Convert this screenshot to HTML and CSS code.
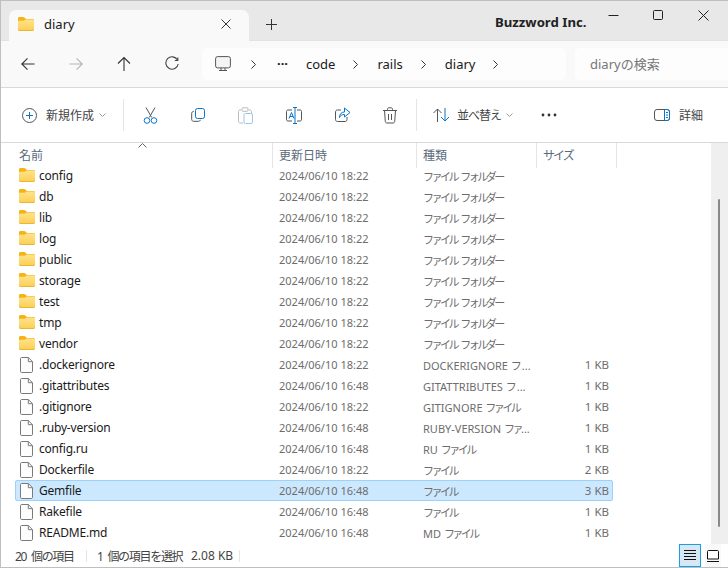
FILE: index.html
```html
<!DOCTYPE html>
<html lang="ja">
<head>
<meta charset="utf-8">
<title>diary</title>
<link rel="stylesheet" href="styles.css">
</head>
<body>
<svg class="defs" width="0" height="0" aria-hidden="true">
  <defs>
    <linearGradient id="fg" x1="0" y1="0" x2="0" y2="1"><stop offset="0" stop-color="#ffe38a"/><stop offset="1" stop-color="#fbcf55"/></linearGradient>
    <symbol id="folder" viewBox="0 0 16 14">
      <path d="M0 1.500C0 .7.600 0 1.400 0h3.800c.5 0 .8.200 1.100.5L8 2h6.600c.8 0 1.400.600 1.400 1.400V6H0z" fill="#f5b316"/>
      <path d="M0 4.600c0-.5.400-.9.900-.9h4.300c.4 0 .7-.1 1-.3L7.600 2.500H14.600c.8 0 1.400.600 1.400 1.400V12.300c0 .8-.6 1.400-1.400 1.400H1.400C.6 13.700 0 13.100 0 12.300z" fill="url(#fg)"/>
      <path d="M0 12.300c0 .8.600 1.400 1.400 1.400H14.600c.8 0 1.400-.6 1.400-1.400V11.800c0 .6-.6 1.100-1.400 1.100H1.400C.6 12.900 0 12.400 0 11.800z" fill="#e6a817"/>
    </symbol>
    <symbol id="file" viewBox="0 0 13 16">
      <path d="M1.500.5H8.300L12.500 4.700V14.300c0 .7-.5 1.200-1.200 1.200H1.700c-.7 0-1.200-.5-1.200-1.200V1.700C.5 1 1 .5 1.500.5z" fill="#fdfdfd" stroke="#7a7a7a"/>
      <path d="M8.300.5V4.700H12.500" fill="none" stroke="#7a7a7a"/>
    </symbol>
  </defs>
</svg>
<div class="window">
  <header class="titlebar">
    <div class="tab">
      <svg class="tab-folder" width="16" height="14"><use href="#folder"/></svg>
      <span class="tab-title">diary</span>
      <svg class="tab-close" width="10" height="10" viewBox="0 0 10 10"><path d="M.5.500l9 9M9.500.500l-9 9" stroke="#333" fill="none"/></svg>
    </div>
    <svg class="tab-new" width="11" height="11" viewBox="0 0 11 11"><path d="M5.500 0v11M0 5.500h11" stroke="#333" fill="none"/></svg>
    <span class="company">Buzzword Inc.</span>
    <div class="winctl">
      <svg width="11" height="11" viewBox="0 0 11 11"><path d="M.5 5.500h10" stroke="#222"/></svg>
      <svg width="11" height="11" viewBox="0 0 11 11"><rect x=".5" y=".5" width="9" height="9" rx="1" fill="none" stroke="#222"/></svg>
      <svg width="11" height="11" viewBox="0 0 11 11"><path d="M.5.500l10 10M10.500.500l-10 10" stroke="#222" fill="none"/></svg>
    </div>
  </header>

  <nav class="navbar">
    <div class="navbtns">
      <svg width="48" height="16" viewBox="0 0 48 16"><path d="M30.500 8H18M23.500 2.300L17.800 8l5.700 5.700" fill="none" stroke="#333" stroke-width="1.100"/></svg>
      <svg width="48" height="16" viewBox="0 0 48 16"><path d="M17.500 8H30M24.500 2.300L30.200 8l-5.700 5.700" fill="none" stroke="#b5b5b5" stroke-width="1.100"/></svg>
      <svg width="48" height="16" viewBox="0 0 48 16"><path d="M24 15V1.500M18 7.500L24 1.500l6 6" fill="none" stroke="#333" stroke-width="1.100"/></svg>
      <svg width="48" height="16" viewBox="0 0 48 16"><path d="M29.500 4A6.200 6.200 0 1 0 30.200 8M29.800 1.500v3h-3" fill="none" stroke="#444" stroke-width="1.100"/></svg>
    </div>
    <div class="crumbs">
      <svg class="pc" width="16" height="16" viewBox="0 0 16 16"><rect x=".6" y=".6" width="14.800" height="11.300" rx="2" fill="#f4f4f4" stroke="#555"/><path d="M4 14.500h8M6 12v2.500M10 12v2.500" stroke="#555" fill="none"/></svg>
      <svg class="chev" width="5" height="9" viewBox="0 0 5 9"><path d="M.5.500l4 4-4 4" fill="none" stroke="#333"/></svg>
      <span class="more">···</span>
      <span class="crumb">code</span>
      <svg class="chev" width="5" height="9" viewBox="0 0 5 9"><path d="M.5.500l4 4-4 4" fill="none" stroke="#333"/></svg>
      <span class="crumb">rails</span>
      <svg class="chev" width="5" height="9" viewBox="0 0 5 9"><path d="M.5.500l4 4-4 4" fill="none" stroke="#333"/></svg>
      <span class="crumb">diary</span>
      <svg class="chev" width="5" height="9" viewBox="0 0 5 9"><path d="M.5.500l4 4-4 4" fill="none" stroke="#333"/></svg>
    </div>
    <div class="search">diaryの検索</div>
  </nav>

  <div class="toolbar">
    <div class="tb-new">
      <svg width="15" height="15" viewBox="0 0 15 15"><circle cx="7.500" cy="7.500" r="7" fill="none" stroke="#555"/><path d="M7.500 4v7M4 7.500h7" stroke="#0a74c9" fill="none"/></svg>
      <span class="tb-label">新規作成</span>
      <svg class="caret" width="7" height="4" viewBox="0 0 7 4"><path d="M.5.500l3 3 3-3" fill="none" stroke="#999"/></svg>
    </div>
    <div class="tb-sep"></div>
    <div class="tb-icons">
      <svg width="48" height="17" viewBox="0 0 48 17"><path d="M19 .5l5.700 10M28 .5l-5.700 10" stroke="#555" fill="none"/><circle cx="20" cy="13.500" r="2.800" fill="none" stroke="#0a74c9"/><circle cx="27" cy="13.500" r="2.800" fill="none" stroke="#0a74c9"/></svg>
      <svg width="48" height="16" viewBox="0 0 48 16"><path d="M19 4.500h-.5c-1 0-1.800.8-1.800 1.800v6.200c0 1 .8 1.800 1.800 1.800h5c1 0 1.800-.6 1.800-1.500" fill="none" stroke="#555"/><rect x="20.500" y="1.500" width="9" height="10" rx="2" fill="none" stroke="#0a74c9"/></svg>
      <svg class="dim" width="48" height="17" viewBox="0 0 48 17"><path d="M18 3h-1c-.8 0-1.500.7-1.500 1.500v10c0 .8.700 1.500 1.500 1.500h3M26 3h1c.8 0 1.500.7 1.500 1.500V6" fill="none" stroke="#555"/><rect x="19" y=".8" width="6" height="3.500" rx="1" fill="none" stroke="#555"/><rect x="21" y="6.500" width="8.500" height="10" rx="1.500" fill="none" stroke="#0a74c9"/></svg>
      <svg width="48" height="17" viewBox="0 0 48 17"><path d="M21 3h-4c-1 0-1.500.6-1.500 1.500v8c0 .9.500 1.500 1.500 1.500h4M26 3h3c1 0 1.500.6 1.500 1.500v8c0 .9-.5 1.500-1.500 1.500h-3" fill="none" stroke="#555"/><path d="M24 .5v16M22 .5h4M22 16.500h4" fill="none" stroke="#0a74c9"/><path d="M18 11.500l2.500-6 2.500 6M19 9.500h3" fill="none" stroke="#0a74c9"/></svg>
      <svg width="48" height="16" viewBox="0 0 48 16"><path d="M22 3h-3.500c-1.200 0-2 .8-2 2v7.500c0 1.200.8 2 2 2H26c1.200 0 2-.8 2-2V10" fill="none" stroke="#555"/><path d="M25.500 1l5.500 4.500-5.500 4.500V7.500c-2.500 0-4 .8-5 3 0-3.500 2-5.500 5-5.500z" fill="none" stroke="#0a74c9"/></svg>
      <svg width="48" height="17" viewBox="0 0 48 17"><path d="M16 3.500h14M20.500 3.500V2.300c0-1 .6-1.500 1.300-1.500h2.400c.7 0 1.300.5 1.300 1.500v1.200M17.500 3.500l.8 11c.1.900.7 1.500 1.700 1.500h6c1 0 1.600-.6 1.700-1.500l.8-11M21.500 7v6M24.500 7v6" fill="none" stroke="#555"/></svg>
    </div>
    <div class="tb-sep"></div>
    <div class="tb-sort">
      <svg width="17" height="14" viewBox="0 0 17 14"><path d="M4.500 14V1M.5 5l4-4 4 4" fill="none" stroke="#555"/><path d="M12 0v13M8 9l4 4 4-4" fill="none" stroke="#0a74c9"/></svg>
      <span class="tb-label kana">並べ替え</span>
      <svg class="caret" width="7" height="4" viewBox="0 0 7 4"><path d="M.5.500l3 3 3-3" fill="none" stroke="#999"/></svg>
    </div>
    <svg class="tb-more" width="16" height="4" viewBox="0 0 16 4"><circle cx="2" cy="2" r="1.400" fill="#333"/><circle cx="8" cy="2" r="1.400" fill="#333"/><circle cx="14" cy="2" r="1.400" fill="#333"/></svg>
    <div class="tb-detail">
      <svg width="16" height="12" viewBox="0 0 16 12"><rect x=".5" y=".5" width="15" height="11" rx="2.500" fill="none" stroke="#555"/><path d="M10.500.5h3c1.200 0 2 .8 2 2v7c0 1.200-.8 2-2 2h-3zM12 3.500h2M12 6h2M12 8.500h2" fill="none" stroke="#0a74c9"/></svg>
      <span class="tb-label">詳細</span>
    </div>
  </div>

  <div class="content">
    <div class="list">
      <div class="thead">
        <span class="th th-name">名前<svg class="sort-arrow" width="9" height="5" viewBox="0 0 9 5"><path d="M.5 4.500l4-4 4 4" fill="none" stroke="#666"/></svg></span>
        <span class="th">更新日時</span>
        <span class="th">種類</span>
        <span class="th th-size">サイズ</span>
      </div>
      <div class="row"><span class="name"><svg class="ic-folder" width="16" height="14"><use href="#folder"/></svg>config</span><span class="cell">2024/06/10 18:22</span><span class="cell type">ファイル フォルダー</span><span class="size"></span></div>
      <div class="row"><span class="name"><svg class="ic-folder" width="16" height="14"><use href="#folder"/></svg>db</span><span class="cell">2024/06/10 18:22</span><span class="cell type">ファイル フォルダー</span><span class="size"></span></div>
      <div class="row"><span class="name"><svg class="ic-folder" width="16" height="14"><use href="#folder"/></svg>lib</span><span class="cell">2024/06/10 18:22</span><span class="cell type">ファイル フォルダー</span><span class="size"></span></div>
      <div class="row"><span class="name"><svg class="ic-folder" width="16" height="14"><use href="#folder"/></svg>log</span><span class="cell">2024/06/10 18:22</span><span class="cell type">ファイル フォルダー</span><span class="size"></span></div>
      <div class="row"><span class="name"><svg class="ic-folder" width="16" height="14"><use href="#folder"/></svg>public</span><span class="cell">2024/06/10 18:22</span><span class="cell type">ファイル フォルダー</span><span class="size"></span></div>
      <div class="row"><span class="name"><svg class="ic-folder" width="16" height="14"><use href="#folder"/></svg>storage</span><span class="cell">2024/06/10 18:22</span><span class="cell type">ファイル フォルダー</span><span class="size"></span></div>
      <div class="row"><span class="name"><svg class="ic-folder" width="16" height="14"><use href="#folder"/></svg>test</span><span class="cell">2024/06/10 18:22</span><span class="cell type">ファイル フォルダー</span><span class="size"></span></div>
      <div class="row"><span class="name"><svg class="ic-folder" width="16" height="14"><use href="#folder"/></svg>tmp</span><span class="cell">2024/06/10 18:22</span><span class="cell type">ファイル フォルダー</span><span class="size"></span></div>
      <div class="row"><span class="name"><svg class="ic-folder" width="16" height="14"><use href="#folder"/></svg>vendor</span><span class="cell">2024/06/10 18:22</span><span class="cell type">ファイル フォルダー</span><span class="size"></span></div>
      <div class="row"><span class="name"><svg class="ic-file" width="13" height="16"><use href="#file"/></svg>.dockerignore</span><span class="cell">2024/06/10 18:22</span><span class="cell">DOCKERIGNORE フ...</span><span class="size">1 KB</span></div>
      <div class="row"><span class="name"><svg class="ic-file" width="13" height="16"><use href="#file"/></svg>.gitattributes</span><span class="cell">2024/06/10 16:48</span><span class="cell">GITATTRIBUTES フ...</span><span class="size">1 KB</span></div>
      <div class="row"><span class="name"><svg class="ic-file" width="13" height="16"><use href="#file"/></svg>.gitignore</span><span class="cell">2024/06/10 18:22</span><span class="cell">GITIGNORE <span class="kana">ファイル</span></span><span class="size">1 KB</span></div>
      <div class="row"><span class="name"><svg class="ic-file" width="13" height="16"><use href="#file"/></svg>.ruby-version</span><span class="cell">2024/06/10 16:48</span><span class="cell">RUBY-VERSION <span class="kana">ファ</span>...</span><span class="size">1 KB</span></div>
      <div class="row"><span class="name"><svg class="ic-file" width="13" height="16"><use href="#file"/></svg>config.ru</span><span class="cell">2024/06/10 16:48</span><span class="cell">RU <span class="kana">ファイル</span></span><span class="size">1 KB</span></div>
      <div class="row"><span class="name"><svg class="ic-file" width="13" height="16"><use href="#file"/></svg>Dockerfile</span><span class="cell">2024/06/10 18:22</span><span class="cell type">ファイル</span><span class="size">2 KB</span></div>
      <div class="row selected"><span class="name"><svg class="ic-file" width="13" height="16"><use href="#file"/></svg>Gemfile</span><span class="cell">2024/06/10 16:48</span><span class="cell type">ファイル</span><span class="size">3 KB</span></div>
      <div class="row"><span class="name"><svg class="ic-file" width="13" height="16"><use href="#file"/></svg>Rakefile</span><span class="cell">2024/06/10 16:48</span><span class="cell type">ファイル</span><span class="size">1 KB</span></div>
      <div class="row"><span class="name"><svg class="ic-file" width="13" height="16"><use href="#file"/></svg>README.md</span><span class="cell">2024/06/10 16:48</span><span class="cell">MD <span class="kana">ファイル</span></span><span class="size">1 KB</span></div>
    </div>
    <div class="scrolltrack"><div class="scrollthumb"></div></div>
  </div>

  <footer class="statusbar">
    <span class="st-count kana">20 個の項目</span>
    <span class="st-sep"></span>
    <span class="st-sel kana">1 個の項目を選択</span>
    <span class="st-size">2.08 KB</span>
    <span class="st-sep"></span>
    <span class="st-views">
      <span class="view active"><svg width="12" height="11" viewBox="0 0 12 11"><path d="M0 .5h12M0 3.500h12M0 6.500h12M0 9.500h12" stroke="#111" fill="none"/></svg></span>
      <span class="view compact"><svg width="12" height="12" viewBox="0 0 12 12"><path d="M.5 9V1.500c0-.6.4-1 1-1h9c.6 0 1 .4 1 1V9z" fill="#fff" stroke="#111"/><path d="M0 11.500h12" stroke="#111"/></svg></span>
    </span>
  </footer>
</div>
</body>
</html>
```

FILE: styles.css
```css
* { box-sizing: border-box; }
html, body { margin: 0; padding: 0; }
body {
  width: 728px;
  height: 568px;
  overflow: hidden;
  background: #fff;
  font-family: "Noto Sans", "Noto Sans CJK JP", sans-serif;
  font-size: 12px;
  color: #1a1a1a;
}
.defs { display: block; height: 0; }
.window {
  width: 728px;
  height: 568px;
  border: 1px solid #bfbfbf;
  border-right: 0;
  display: flex;
  flex-direction: column;
  background: #fff;
}
.kana { letter-spacing: -1px; }

/* Title bar */
.titlebar {
  height: 40px;
  flex: none;
  background: #e8e8e8;
  display: flex;
  align-items: flex-end;
  padding-left: 8px;
  border-bottom: 1px solid #e2e2e2;
}
.tab {
  width: 240px;
  height: 31px;
  margin-bottom: -1px;
  background: #f9f9f9;
  border-radius: 7px 7px 0 0;
  display: flex;
  align-items: center;
  padding: 0 18px 0 9px;
}
.tab-folder { flex: none; margin-top: -3px; }
.tab-title { margin-left: 10px; flex: 1; font-size: 13px; margin-top: -3px; }
.tab-close { flex: none; margin-top: -4px; }
.tab-new { margin: 0 0 10px 17px; flex: none; }
.company {
  margin: 0 0 8px 218px;
  font-weight: 700;
  font-size: 13.200px;
  color: #222;
  line-height: 19px;
  white-space: nowrap;
  width: 104px;
}
.winctl {
  display: flex;
  gap: 34px;
  margin: 0 0 19px 0;
  padding-left: 9px;
  align-items: center;
}

/* Nav bar */
.navbar {
  height: 47px;
  flex: none;
  background: #f9f9f9;
  border-bottom: 1px solid #d9d9d9;
  display: flex;
  align-items: center;
  padding-left: 3px;
}
.navbtns { display: flex; width: 198px; flex: none; }
.crumbs {
  width: 364px;
  height: 32px;
  background: #fdfdfd;
  border-radius: 5px;
  display: flex;
  align-items: center;
  padding-left: 13px;
  font-size: 13px;
}
.pc { flex: none; margin-right: 20px; }
.chev { flex: none; }
.more { margin: -3px 15px 0 21px; font-weight: 700; width: 14px; }
.crumb { margin: 0 18px 0 0; }
.crumb + .chev { margin-right: 19px; }
.search {
  margin-left: 9px;
  flex: 1;
  height: 32px;
  background: #fdfdfd;
  border-radius: 5px 0 0 5px;
  padding-left: 15px;
  line-height: 32px;
  font-size: 13px;
  color: #777;
}

/* Toolbar */
.toolbar {
  height: 55px;
  flex: none;
  border-bottom: 1px solid #d9d9d9;
  display: flex;
  align-items: center;
  padding-left: 21px;
}
.tb-new { display: flex; align-items: center; width: 101px; flex: none; }
.tb-label { margin-left: 9px; color: #444; font-size: 12px; }
.caret { margin-left: 5px; flex: none; }
.tb-sep { width: 1px; height: 32px; background: #e5e5e5; flex: none; }
.tb-icons { display: flex; align-items: center; margin: 0 1px 0 3px; }
.dim { opacity: .4; }
.tb-sort { display: flex; align-items: center; width: 108px; flex: none; margin-left: 16px; }
.tb-sort .tb-label { margin-left: 7px; }
.tb-more { flex: none; margin-left: 0; }
.tb-detail { display: flex; align-items: center; margin-left: 97px; }
.tb-detail .tb-label { margin-left: 9px; }

/* List */
.content { flex: 1; min-height: 0; display: flex; }
.list { flex: 1; min-width: 0; padding-left: 14px; }
.thead {
  display: grid;
  grid-template-columns: 258px 144px 120px 80px;
  grid-auto-rows: 25px;
  height: 22px;
}
.th {
  border-right: 1px solid #e5e5e5;
  padding-left: 6px;
  line-height: 25px;
  color: #5a6a7a;
  font-size: 12px;
}
.th-name { position: relative; padding-left: 4px; }
.th-size { letter-spacing: -2px; }
.sort-arrow { position: absolute; left: 123px; top: 0; }
.row {
  display: grid;
  grid-template-columns: 257px 144px 120px 77px;
  height: 21px;
  width: 598px;
  align-items: center;
  border: 1px solid transparent;
  border-radius: 2px;
}
.row.selected { background: #cce8ff; border-color: #99d1ff; }
.name {
  display: flex;
  align-items: center;
  padding-left: 3px;
  color: #1a1a1a;
  margin-left: -1px;
  white-space: nowrap;
  letter-spacing: -.2px;
}
.ic-folder { margin: -1px 4px 0 1px; flex: none; }
.ic-file { margin: 0 6px 0 2px; flex: none; }
.cell { padding-left: 6px; color: #6d6d6d; font-size: 11px; white-space: nowrap; }
.type, .cell .kana { letter-spacing: -2.500px; }
.type { word-spacing: 3px; }
.size { text-align: right; padding-right: 5px; color: #6d6d6d; font-size: 11.500px; }
.scrolltrack {
  width: 17px;
  flex: none;
  background: #efefef;
  padding: 56px 0 17px 7px;
}
.scrollthumb { width: 2px; height: 100%; background: #8a8a8a; border-radius: 1px; }

/* Status bar */
.statusbar {
  height: 23px;
  flex: none;
  display: flex;
  align-items: center;
  padding-left: 14px;
  color: #444;
  font-size: 12px;
}
.st-count { width: 71px; word-spacing: 3px; letter-spacing: -1.300px; }
.st-sep { width: 1px; height: 12px; background: #e5e5e5; flex: none; }
.st-sel { margin-left: 10px; width: 94px; white-space: nowrap; word-spacing: 3px; letter-spacing: -1.300px; }
.st-size { width: 48px; white-space: nowrap; }
.st-views { margin-left: auto; display: flex; gap: 4px; padding-right: 7px; height: 23px; }
.view { height: 23px; display: flex; align-items: center; justify-content: center; background: #f9f9f9; }
.view.active { width: 22px; background: #d5e8f4; border: 1px solid #1a9fe0; }
.view.compact { width: 16px; }
```
